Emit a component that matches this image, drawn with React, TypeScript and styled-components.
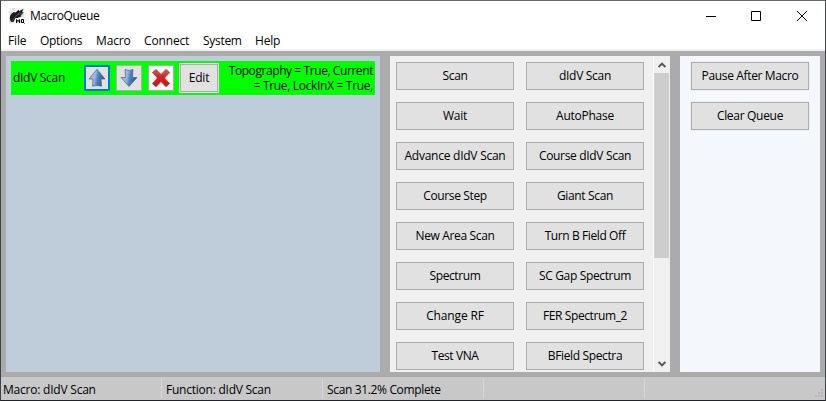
import React from 'react';
import styled, { createGlobalStyle } from 'styled-components';

const Global = createGlobalStyle`
  * { box-sizing: border-box; }
  body { margin: 0; overflow: hidden; background: #fff; }
`;

const Window = styled.div`
  width: 826px;
  height: 401px;
  display: flex;
  flex-direction: column;
  border: 1px solid #686868;
  border-left-color: #3d424a;
  border-right-color: #3d454e;
  border-bottom-color: #1b2430;
  background: #ababab;
  color: #000;
  font: 12px/16px 'Open Sans', 'Noto Sans', sans-serif;
  white-space: nowrap;
  cursor: default;
`;

const TitleBar = styled.header`
  height: 29px;
  flex: none;
  display: flex;
  align-items: center;
  padding-left: 8px;
  background: #fff;
`;

const Title = styled.span`
  flex: 1;
  padding: 1px 0 0 5px;
  letter-spacing: -0.35px;
`;

const Caption = styled.div`
  width: 45px;
  height: 29px;
  flex: none;
  display: flex;
  align-items: center;
  justify-content: center;
  &:last-child { width: 47px; }
`;

const MenuBar = styled.nav`
  height: 21px;
  flex: none;
  display: flex;
  align-items: center;
  background: #fff;
  border-bottom: 2px solid #f0f0f0;
  padding: 2px 0 0 7px;
`;

const MenuItem = styled.span<{ $width: number; $track: number }>`
  width: ${p => p.$width}px;
  letter-spacing: ${p => p.$track}px;
`;

const Workspace = styled.main`
  height: 326px;
  flex: none;
  display: flex;
  gap: 10px;
  padding: 5px;
`;

const QueuePanel = styled.section`
  width: 374px;
  padding: 5px;
  background: #bfccda;
`;

const QueueRow = styled.div`
  width: 364px;
  height: 34px;
  display: flex;
  align-items: center;
  background: #00ff00;
`;

const MacroName = styled.span`
  width: 73px;
  padding-left: 2px;
  letter-spacing: -0.3px;
`;

const IconButton = styled.button<{ $focus?: boolean; $light?: boolean }>`
  width: 26px;
  height: 26px;
  display: flex;
  align-items: center;
  justify-content: center;
  margin: 0 6px 0 0;
  padding: 0;
  border: ${p => (p.$focus ? '2px solid #0078d7' : '1px solid #adadad')};
  background: ${p => (p.$light ? '#f0f0f0' : '#e1e1e1')};
`;

const EditButton = styled.button`
  width: 40px;
  height: 30px;
  margin-left: -1px;
  padding: 0 0 1px;
  font: inherit;
  letter-spacing: -0.2px;
  color: #000;
  background: #e1e1e1;
  border: 1px solid #f0f0f0;
  box-shadow: inset 0 0 0 1px #adadad;
`;

const Details = styled.div`
  flex: 1;
  display: flex;
  flex-direction: column;
  text-align: right;
  line-height: 15px;
  padding-right: 2px;
`;

const DetailLine = styled.span<{ $track: number }>`
  letter-spacing: ${p => p.$track}px;
`;

const FunctionPanel = styled.section`
  width: 280px;
  display: flex;
  background: #f0f0f0;
`;

const ButtonGrid = styled.div`
  width: 263px;
  display: grid;
  grid-template-columns: 118px 118px;
  grid-auto-rows: 28px;
  gap: 12px;
  padding: 6px;
`;

const PushButton = styled.button<{ $track?: number }>`
  width: 118px;
  height: 28px;
  padding: 0 0 1px;
  font: inherit;
  letter-spacing: ${p => p.$track ?? -0.3}px;
  color: #000;
  background: #e1e1e1;
  border: 1px solid #adadad;
`;

const ScrollBar = styled.div`
  width: 17px;
  display: flex;
  flex-direction: column;
  border-left: 1px solid #fff;
`;

const ScrollArrow = styled.div`
  height: 17px;
  display: flex;
  align-items: center;
  justify-content: center;
  padding-right: 1px;
`;

const ScrollTrack = styled.div`
  flex: 1;
`;

const ScrollThumb = styled.div`
  width: 15px;
  height: 185px;
  background: #cdcdcd;
`;

const ControlPanel = styled.aside`
  width: 140px;
  display: flex;
  flex-direction: column;
  align-items: center;
  gap: 12px;
  padding-top: 6px;
  background: #f4f7fc;
  button { box-shadow: 0 0 0 1px #f0f0f0; }
`;

const StatusBar = styled.footer`
  flex: 1;
  display: flex;
  align-items: center;
  background: #c8c8c8;
`;

const StatusCell = styled.div<{ $last?: boolean; $track?: number; $indent?: number }>`
  width: ${p => (p.$last ? 180 : 161)}px;
  height: 20px;
  flex: none;
  padding: 3px 0 0 ${p => p.$indent ?? 4}px;
  letter-spacing: ${p => p.$track ?? 0}px;
  border-right: ${p => (p.$last ? '0' : '1px solid #d7d7d7')};
  display: flex;
  justify-content: ${p => (p.$last ? 'flex-end' : 'flex-start')};
`;

const GripHolder = styled.div`
  align-self: flex-end;
  height: 10px;
  display: flex;
  padding-right: 1px;
`;

const FeatherIcon = () => (
  <svg width="16" height="16" viewBox="0 0 16 16">
    <path d="M0 0h16v16H0z" fill="#f4f4f4" />
    <path d="M0 3h3V0h3v3H3v3H0zM12 6h3v3h-3zM0 12h3v3H0zM9 12h3v3H9z" fill="#e2e2e2" />
    <path d="M1.500 13C0 9 1 6 5 4L6.500 4.500L10 1.500V3.200L14.500 .8L13 4.500L15 4L11.500 8L12.500 8.500L8.500 10L6.500 10L4.500 14L2.500 14Z" fill="#1c1c1c" />
    <path d="M3 13l4-5 4-4M9 7l4-2" stroke="#666" strokeWidth=".7" fill="none" />
    <path d="M7.500 15v-3.500l1.500 2 1.500-2v3.500M12.500 11.500h2v3h-2zM14 14l1.500 1.500" stroke="#000" fill="none" />
  </svg>
);

const ArrowIcon = ({ down = false }: { down?: boolean }) => (
  <svg width="18" height="20" viewBox="0 0 18 20">
    <defs>
      <linearGradient id={down ? 'arrowDown' : 'arrowUp'} x1="0" y1="0" x2="1" y2="0.2">
        <stop offset="0" stopColor="#a4b8cf" />
        <stop offset=".42" stopColor="#9dbbe0" />
        <stop offset=".62" stopColor="#5284bf" />
        <stop offset="1" stopColor="#2b558c" />
      </linearGradient>
    </defs>
    <path
      d={down
        ? 'M5 1.500Q9 3.500 13 1.500L12.500 9.500H17L9 18.500L1 9.500H5.500Z'
        : 'M9 1.200L17 11H13L13.500 18.200Q9 16.800 4.500 18.200L5 11H1Z'}
      fill={`url(#${down ? 'arrowDown' : 'arrowUp'})`}
      stroke="#42638c"
      strokeWidth=".7"
    />
  </svg>
);

const DeleteIcon = () => (
  <svg width="22" height="22" viewBox="-1 -1 22 22">
    <defs>
      <linearGradient id="cross" x1="0" y1="0" x2="0" y2="1">
        <stop offset="0" stopColor="#dc5a5a" />
        <stop offset=".45" stopColor="#cb2424" />
        <stop offset="1" stopColor="#d01616" />
      </linearGradient>
    </defs>
    <path d="M-1-1h22v22H-1z" fill="#fafafa" />
    <path
      d="M5 1.500L10 6.400L15 1.500L18.500 4.500L13.500 10L18.500 15.500L15 18.800L10 13.600L5 18.800L1.500 15.500L6.500 10L1.500 4.500Z"
      fill="url(#cross)"
      stroke="#a92020"
      strokeWidth=".7"
      strokeLinejoin="round"
    />
  </svg>
);

const Chevron = ({ down = false }: { down?: boolean }) => (
  <svg width="8" height="6" viewBox="0 0 8 6">
    <path d={down ? 'M.6 1L4 4.400L7.400 1' : 'M.6 5L4 1.600L7.400 5'} fill="none" stroke="#555" strokeWidth="2" />
  </svg>
);

const SizeGrip = () => (
  <svg width="9" height="9" viewBox="0 0 9 9">
    <path d="M6 0h2v2H6zM3 3h2v2H3zM6 3h2v2H6zM0 6h2v2H0zM3 6h2v2H3zM6 6h2v2H6z" fill="#b8b8b8" />
  </svg>
);

const menus: [string, number, number][] = [
  ['File', 32, -0.15],
  ['Options', 56, -0.3],
  ['Macro', 48, -0.15],
  ['Connect', 59, -0.15],
  ['System', 52, -0.3],
  ['Help', 40, -0.2],
];

const functions: [string, number][] = [
  ['Scan', -0.3], ['dIdV Scan', -0.3],
  ['Wait', -0.3], ['AutoPhase', -0.25],
  ['Advance dIdV Scan', -0.25], ['Course dIdV Scan', -0.32],
  ['Course Step', -0.36], ['Giant Scan', -0.35],
  ['New Area Scan', -0.35], ['Turn B Field Off', -0.4],
  ['Spectrum', -0.4], ['SC Gap Spectrum', -0.35],
  ['Change RF', -0.15], ['FER Spectrum_2', -0.4],
  ['Test VNA', -0.4], ['BField Spectra', -0.36],
];

export default function App() {
  return (
    <>
      <Global />
      <Window>
        <TitleBar>
          <FeatherIcon />
          <Title>MacroQueue</Title>
          <Caption>
            <svg width="10" height="10"><path d="M0 5.500h10" stroke="#000" /></svg>
          </Caption>
          <Caption>
            <svg width="10" height="10"><path d="M.5.5h9v9h-9z" stroke="#000" fill="none" /></svg>
          </Caption>
          <Caption>
            <svg width="10" height="10"><path d="M0 0l10 10M10 0L0 10" stroke="#000" /></svg>
          </Caption>
        </TitleBar>
        <MenuBar>
          {menus.map(([name, width, track]) => (
            <MenuItem key={name} $width={width} $track={track}>{name}</MenuItem>
          ))}
        </MenuBar>
        <Workspace>
          <QueuePanel>
            <QueueRow>
              <MacroName>dIdV Scan</MacroName>
              <IconButton $focus aria-label="Move up"><ArrowIcon /></IconButton>
              <IconButton aria-label="Move down"><ArrowIcon down /></IconButton>
              <IconButton $light aria-label="Remove"><DeleteIcon /></IconButton>
              <EditButton>Edit</EditButton>
              <Details>
                <DetailLine $track={-0.42}>Topography = True, Current</DetailLine>
                <DetailLine $track={-0.32}>= True, LockInX = True,</DetailLine>
              </Details>
            </QueueRow>
          </QueuePanel>
          <FunctionPanel>
            <ButtonGrid>
              {functions.map(([name, track]) => (
                <PushButton key={name} $track={track}>{name}</PushButton>
              ))}
            </ButtonGrid>
            <ScrollBar>
              <ScrollArrow><Chevron /></ScrollArrow>
              <ScrollTrack><ScrollThumb /></ScrollTrack>
              <ScrollArrow><Chevron down /></ScrollArrow>
            </ScrollBar>
          </FunctionPanel>
          <ControlPanel>
            <PushButton $track={-0.35}>Pause After Macro</PushButton>
            <PushButton $track={-0.3}>Clear Queue</PushButton>
          </ControlPanel>
        </Workspace>
        <StatusBar>
          <StatusCell $indent={2} $track={-0.22}>Macro: dIdV Scan</StatusCell>
          <StatusCell $track={-0.24}>Function: dIdV Scan</StatusCell>
          <StatusCell $track={-0.35}>Scan 31.2% Complete</StatusCell>
          <StatusCell />
          <StatusCell $last><GripHolder><SizeGrip /></GripHolder></StatusCell>
        </StatusBar>
      </Window>
    </>
  );
}
